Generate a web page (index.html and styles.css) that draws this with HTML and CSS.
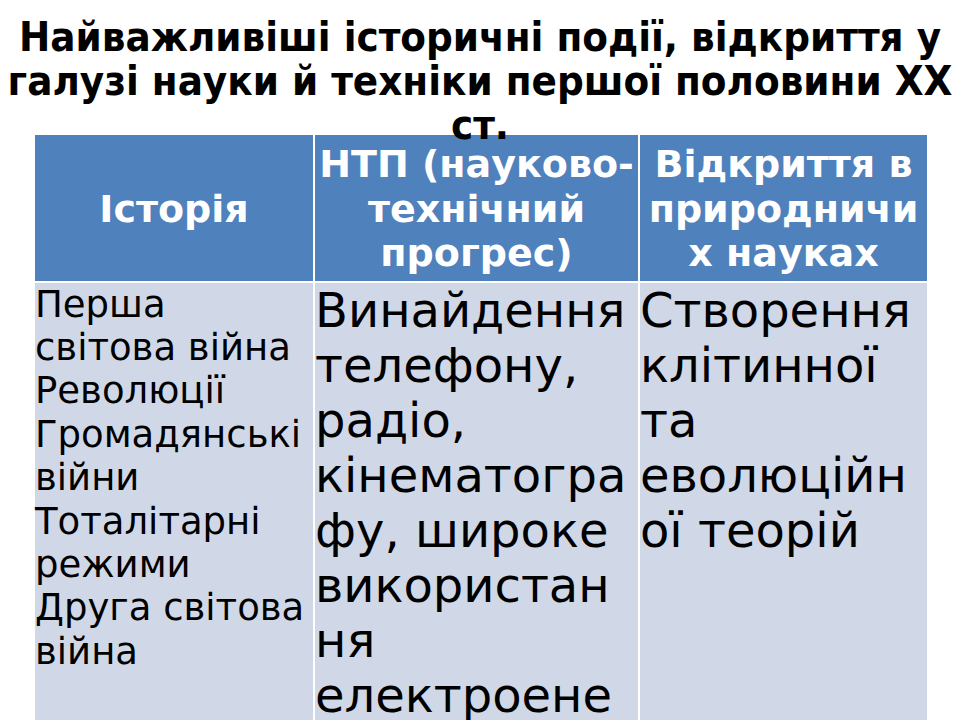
FILE: index.html
```html
<!DOCTYPE html>
<html lang="uk">
<head>
<meta charset="utf-8">
<link rel="stylesheet" href="styles.css">
</head>
<body>
<h1 class="title">Найважливіші історичні події, відкриття у<br>галузі науки й техніки першої половини ХХ<br>ст.</h1>
<table class="grid">
  <colgroup>
    <col class="c1">
    <col class="c2">
    <col class="c3">
  </colgroup>
  <thead>
    <tr>
      <th>Історія</th>
      <th>НТП (науково-технічний прогрес)</th>
      <th>Відкриття в природничих науках</th>
    </tr>
  </thead>
  <tbody>
    <tr>
      <td class="small">Перша світова війна<br>Революції<br>Громадянські війни<br>Тоталітарні режими<br>Друга світова війна</td>
      <td class="big">Винайдення телефону, радіо, кінематографу, широке використання електроенергії</td>
      <td class="big">Створення клітинної та еволюційної теорій</td>
    </tr>
  </tbody>
</table>
</body>
</html>
```

FILE: styles.css
```css
html, body {
  margin: 0;
  padding: 0;
  background: #ffffff;
  overflow: hidden;
  width: 960px;
  height: 720px;
}
.title {
  position: relative;
  z-index: 2;
  margin: 15px 0 0 0;
  height: 118px;
  font-family: "DejaVu Sans Condensed", "DejaVu Sans", sans-serif;
  font-stretch: condensed;
  font-weight: bold;
  font-size: 41.6px;
  line-height: 44px;
  text-align: center;
  color: #000;
  white-space: nowrap;
}
.grid {
  margin-left: 33px;
  border-collapse: collapse;
  table-layout: fixed;
  width: 894px;
  font-family: "DejaVu Sans", sans-serif;
}
.c1 { width: 280px; }
.c2 { width: 325px; }
.c3 { width: 289px; }
.grid th, .grid td {
  border: 2px solid #ffffff;
  overflow-wrap: anywhere;
  vertical-align: top;
}
.grid th {
  background: #4f81bd;
  color: #ffffff;
  font-weight: bold;
  font-size: 38px;
  line-height: 44.5px;
  height: 133px;
  padding: 7px 3px 5px;
  text-align: center;
  vertical-align: middle;
}
.grid td {
  background: #d0d8e8;
  color: #000;
  height: 460px;
  padding: 0 1px 0 0;
  text-align: left;
}
.small {
  font-size: 37px;
  line-height: 43.4px;
}
.big {
  font-size: 48px;
  line-height: 55px;
}
```
